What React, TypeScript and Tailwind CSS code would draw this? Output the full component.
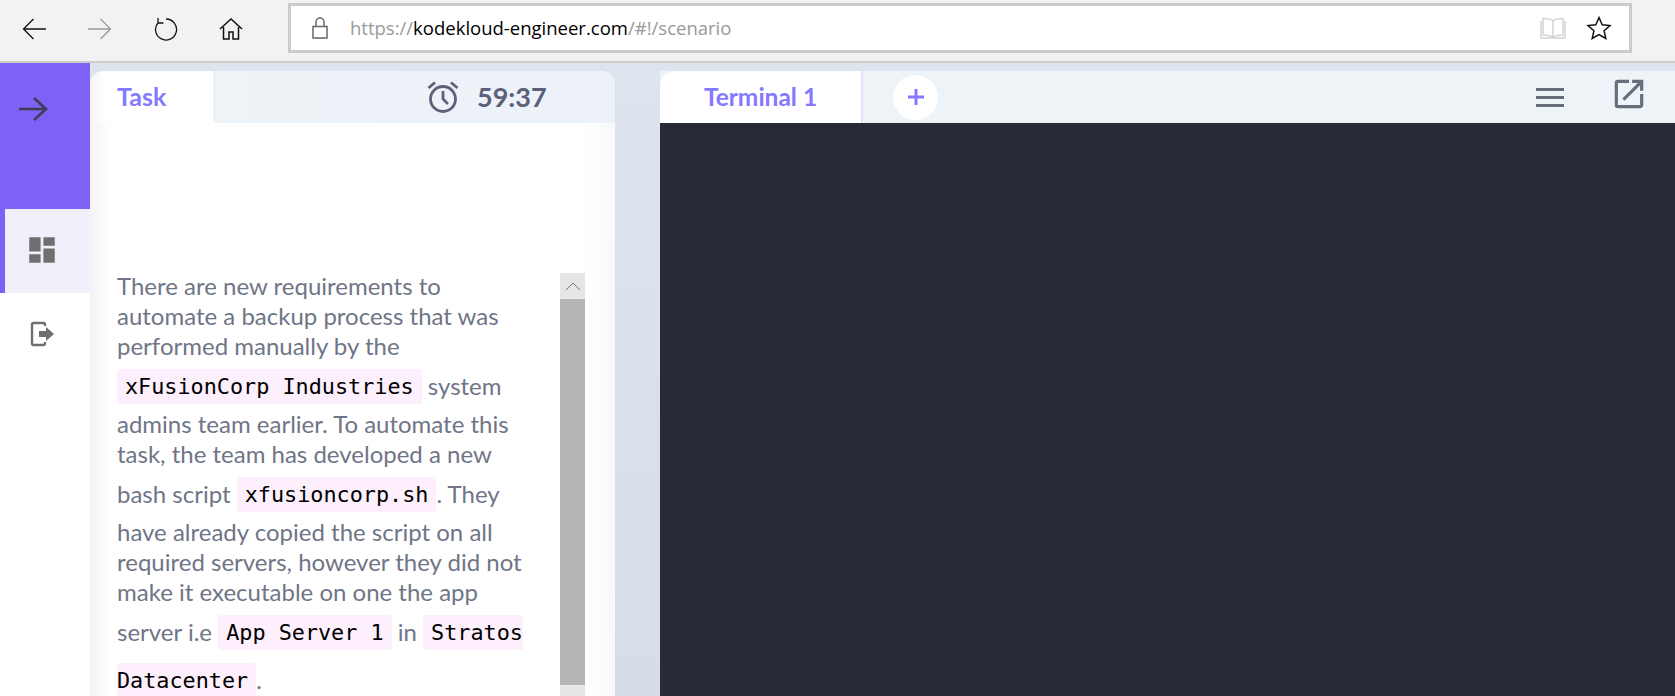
import React from 'react';
import { MdDashboard, MdOpenInNew } from 'react-icons/md';

const Code: React.FC<{ children: React.ReactNode }> = ({ children }) => (
  <code className="relative top-[2px] bg-[#fdeffb] text-black rounded-[3px] px-[8px] py-[5px] align-[3px] font-['DejaVu_Sans_Mono',monospace] text-[21.8px] leading-[48px]">
    {children}
  </code>
);

const BrowserBar: React.FC = () => (
  <div className="h-[63px] shrink-0 bg-[#f2f2f2] border-b-2 border-[#cccccc] flex items-start">
    <div className="w-[288px] shrink-0 h-[57px] flex items-center">
      <svg className="ml-[22px]" width="24" height="22" viewBox="0 0 24 22" fill="none" stroke="#111" strokeWidth="1.3">
        <path d="M1.500 11H24M11.500 1 1.500 11l10 10" />
      </svg>
      <svg className="ml-[42px]" width="24" height="22" viewBox="0 0 24 22" fill="none" stroke="#999" strokeWidth="1.3">
        <path d="M0 11h22.500M12.500 1l10 10-10 10" />
      </svg>
      <svg className="ml-[42px]" width="24" height="24" viewBox="0 0 24 24" fill="none" stroke="#111" strokeWidth="1.3">
        <path d="M12 2a10.500 10.500 0 1 1-7.500 3.200M4 1v5h5.500" />
      </svg>
      <svg className="ml-[41px]" width="24" height="24" viewBox="0 0 24 24" fill="none" stroke="#111" strokeWidth="1.5">
        <path d="M1 12 12 2l11 10M4.500 10v12h5.500v-7h4v7h5.500V10" />
      </svg>
    </div>
    <div className="mt-[3px] w-[1344px] h-[50px] bg-white border-[3px] border-[#cccccc] flex items-center font-['Open_Sans',sans-serif] text-[18.500px]">
      <svg className="ml-[20px]" width="18" height="24" viewBox="0 0 18 24" fill="none" stroke="#666" strokeWidth="1.5">
        <path d="M2 10.500h14V22H2zM5 10.500V6a4 4 0 0 1 8 0v4.500" />
      </svg>
      <span className="ml-[21px] text-[#999999]">https://</span>
      <span className="text-black">kodekloud-engineer.com</span>
      <span className="text-[#999999]">/#!/scenario</span>
      <svg className="ml-auto" width="26" height="24" viewBox="0 0 26 24" fill="none" stroke="#d4d4d4" strokeWidth="1.5">
        <path d="M13 5C11 3 7 2.500 3 2.500V19c4 0 8 .5 10 2.500 2-2 6-2.500 10-2.500V2.500C19 2.500 15 3 13 5zM13 5v16M1 5v17h24V5" />
      </svg>
      <svg className="ml-[20px] mr-[17px]" width="26" height="26" viewBox="0 0 26 26" fill="none" stroke="#111" strokeWidth="1.5">
        <path d="m13 2.500 3.200 7.300 7.800.8-5.900 5.200 1.700 7.700-6.800-4-6.800 4 1.700-7.700L2 10.600l7.800-.8z" />
      </svg>
    </div>
  </div>
);

const Sidebar: React.FC = () => (
  <div className="w-[90px] shrink-0 bg-white flex flex-col">
    <div className="h-[146px] bg-[#7d62f5] pt-[33px] pl-[18px]">
      <svg width="30" height="26" viewBox="0 0 30 26" fill="none" stroke="#3f3d56" strokeWidth="2.600">
        <path d="M1 13h27M16 2l12 11-12 11" />
      </svg>
    </div>
    <div className="h-[84px] bg-[#f1f0fa] border-l-[5px] border-[#7d62f5] flex items-center pl-[20px] pb-[2px]">
      <MdDashboard className="text-[#6f6f6f]" size={34} />
    </div>
    <div className="h-[84px] flex items-center pl-[28px] pb-[2px]">
      <svg width="28" height="28" viewBox="0 0 28 28" fill="none">
        <path d="M17 6V4.500A1.500 1.500 0 0 0 15.500 3h-10A1.500 1.500 0 0 0 4 4.500v19A1.500 1.500 0 0 0 5.500 25h10a1.500 1.500 0 0 0 1.500-1.500V22" stroke="#6f6f6f" strokeWidth="2.400" />
        <path d="M11 11h7V7l8 7-8 7v-4h-7z" fill="#6f6f6f" />
      </svg>
    </div>
  </div>
);

const TaskPanel: React.FC = () => (
  <div className="w-[525px] shrink-0 mt-[8px] flex flex-col rounded-t-[14px] overflow-hidden bg-gradient-to-r from-[#f4f4f6] via-white via-[4%] to-white">
    <div className="h-[52px] shrink-0 bg-gradient-to-r from-[#eef3f7] to-[#edf2f9] flex items-center">
      <div className="w-[123px] h-full bg-gradient-to-r from-[#f4f4f6] to-white to-[12%] pl-[27px] flex items-center font-['Lato',sans-serif] font-bold text-[25px] text-[#8479ff]">
        Task
      </div>
      <svg className="ml-[213px]" width="34" height="34" viewBox="0 0 34 34" fill="none" stroke="#5c6079" strokeWidth="2.800">
        <circle cx="17" cy="19" r="12.500" />
        <path d="M17 11v8l5 5M2.500 8 9 2.500M31.500 8 25 2.500" />
      </svg>
      <span className="ml-[17px] font-['Lato',sans-serif] font-bold text-[27px] text-[#5c6079]">59:37</span>
    </div>
    <div className="flex-1 flex min-h-0">
      <div className="w-[470px] shrink-0 pl-[27px] pr-[32px] pt-[148px] font-['Lato',sans-serif] text-[24px] leading-[30px] text-[#6f7587]">
        <p>
          There are new requirements to automate a backup process that was performed manually by the <Code>xFusionCorp Industries</Code> system admins team earlier. To automate this task, the team has developed a new bash script <Code>xfusioncorp.sh</Code>. They have already copied the script on all required servers, however they did not make it executable on one the app server i.e <Code>App Server 1</Code> in <Code>Stratos Datacenter</Code>.
        </p>
      </div>
      <div className="w-[25px] shrink-0 mt-[150px] bg-[#e6e6e6] flex flex-col">
        <div className="h-[26px] flex items-center justify-center">
          <svg width="16" height="10" viewBox="0 0 16 10" fill="none" stroke="#777" strokeWidth="1">
            <path d="m1 9 7-7 7 7" />
          </svg>
        </div>
        <div className="h-[386px] bg-[#b5b5b5]" />
      </div>
      <div className="flex-1 bg-gradient-to-r from-white to-[#f6f8fb]" />
    </div>
  </div>
);

const TerminalPanel: React.FC = () => (
  <div className="flex-1 ml-[45px] mt-[8px] flex flex-col">
    <div className="h-[52px] shrink-0 bg-[#eef3f8] flex items-center">
      <div className="w-[203px] h-full bg-white rounded-tl-[16px] border-r-2 border-[#dfe6fb] flex items-center justify-center font-['Lato',sans-serif] font-bold text-[24.500px] text-[#8479ff]">
        Terminal 1
      </div>
      <div className="ml-[30px] w-[45px] h-[45px] rounded-full bg-white flex items-center justify-center">
        <svg width="20" height="20" viewBox="0 0 20 20" fill="none" stroke="#8479ff" strokeWidth="3">
          <path d="M10 2v16M2 10h16" />
        </svg>
      </div>
      <div className="ml-auto w-[28px] flex flex-col gap-[5px] mr-[46px]">
        <div className="h-[3px] bg-[#666e7c]" />
        <div className="h-[3px] bg-[#666e7c]" />
        <div className="h-[3px] bg-[#666e7c]" />
      </div>
      <MdOpenInNew className="text-[#666e7c] mr-[27px] mb-[6px]" size={38} />
    </div>
    <div className="flex-1 bg-[#282a36]" />
  </div>
);

export default function App() {
  return (
    <div className="w-[1675px] h-[696px] overflow-hidden flex flex-col bg-gradient-to-b from-[#dfe5ee] to-[#d5dde9]">
      <BrowserBar />
      <div className="flex-1 flex min-h-0">
        <Sidebar />
        <TaskPanel />
        <TerminalPanel />
      </div>
    </div>
  );
}
